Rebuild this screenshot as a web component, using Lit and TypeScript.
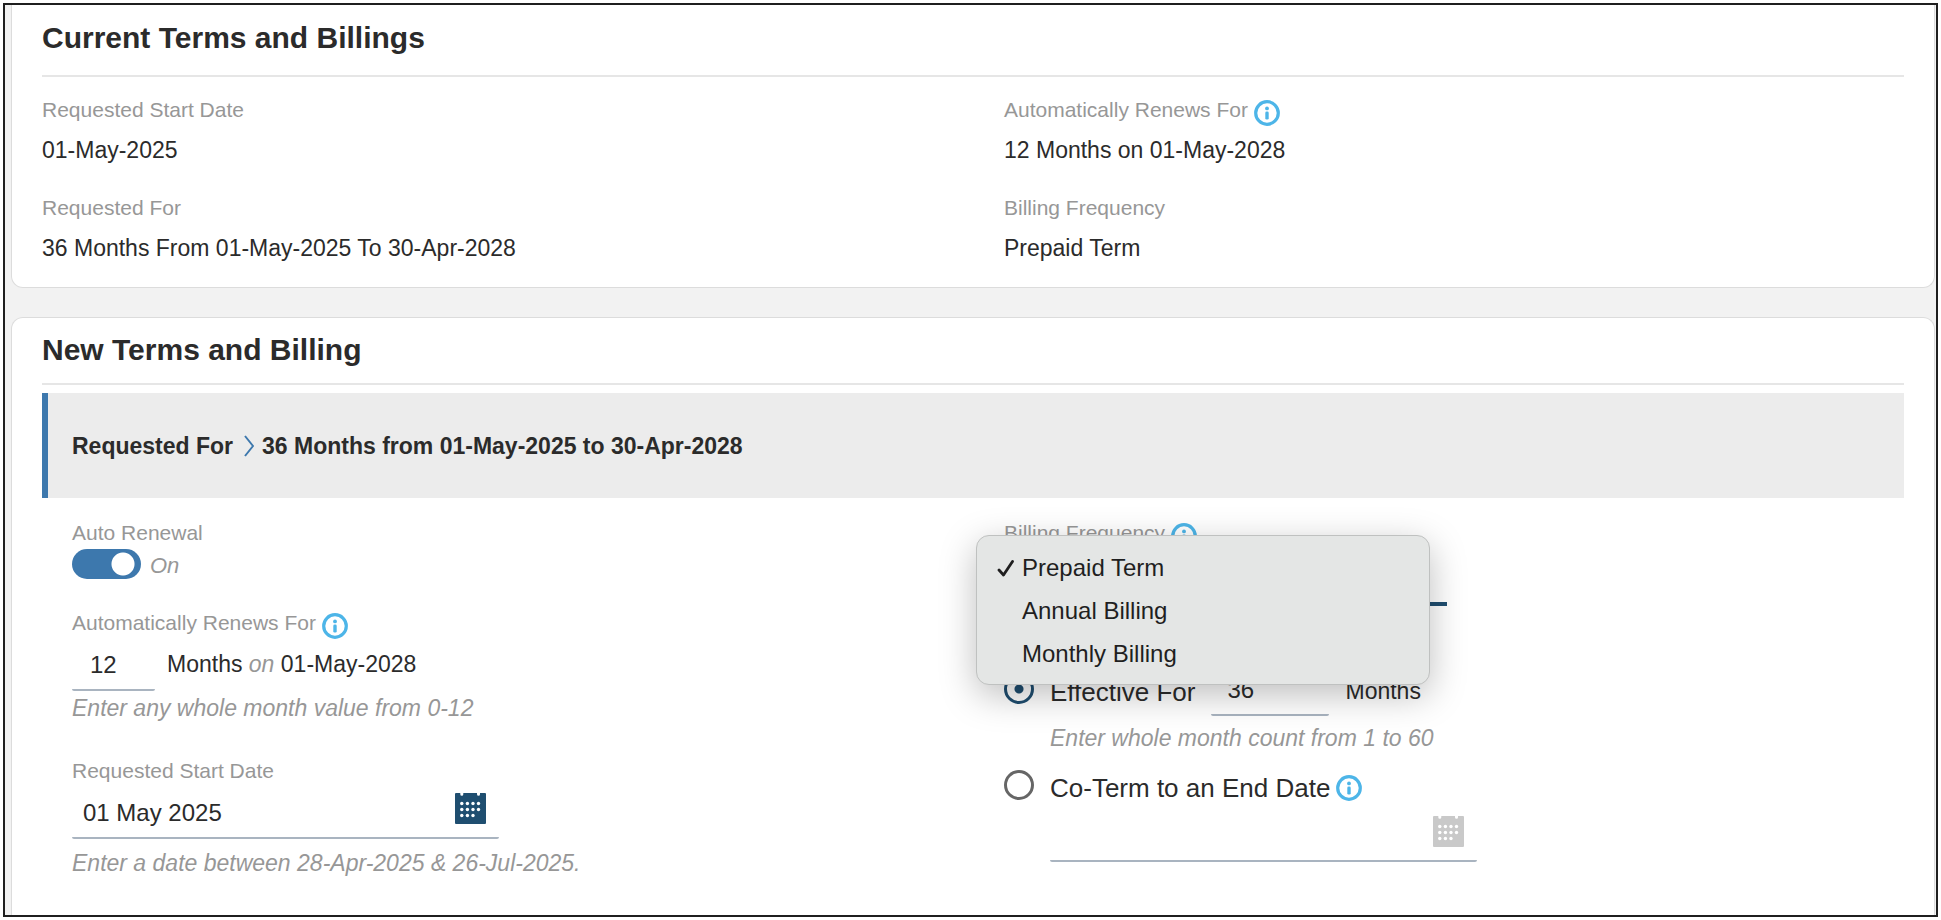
import { LitElement, html, css, svg } from "lit";
import { customElement, state } from "lit/decorators.js";

const infoIcon = html`<svg class="info" viewBox="0 0 26 26" role="img" aria-label="More information">
  <circle cx="13" cy="13" r="11.3" fill="none" stroke="#4db5e8" stroke-width="3.2" />
  <circle cx="13" cy="8.4" r="1.9" fill="#4db5e8" />
  <rect x="11.3" y="11.6" width="3.4" height="8" rx="1.3" fill="#4db5e8" />
</svg>`;

const dots = [
  [6.8, 10.5], [12.4, 10.5], [18, 10.5], [23.5, 10.5],
  [6.8, 16.5], [12.4, 16.5], [18, 16.5], [23.5, 16.5],
  [6.8, 22.5], [12.4, 22.5], [18, 22.5],
];

const calendarIcon = html`<svg viewBox="0 0 31 31" aria-hidden="true">
  <path fill="currentColor" d="M1 0H5.3V1.3A1.5 1.5 0 0 0 8.3 1.3V0H22V1.3A1.5 1.5 0 0 0 25 1.3V0H30Q31 0 31 1V30Q31 31 30 31H1Q0 31 0 30V1Q0 0 1 0Z" />
  ${dots.map(([x, y]) => svg`<circle cx=${x} cy=${y} r="1.7" fill="#fff" />`)}
</svg>`;

@customElement("app-root")
export class AppRoot extends LitElement {
  @state() private frequency = "Prepaid Term";
  private options = ["Prepaid Term", "Annual Billing", "Monthly Billing"];

  static styles = css`
    :host {
      display: block;
      height: 100vh;
      box-sizing: border-box;
      padding: 3px;
      background: #fff;
      color: #2b2b2b;
      font: 23px/28px "Liberation Sans", Arial, sans-serif;
    }
    * { box-sizing: border-box; }
    .frame {
      height: 100%;
      border: 2px solid #1f1f1f;
      padding: 0 1px 0 6px;
      background: #f2f2f2;
      overflow: hidden;
      display: flex;
      flex-direction: column;
      gap: 29px;
    }
    .card {
      background: #fff;
      border: 1px solid #dcdcdc;
      border-radius: 12px;
      padding: 14px 30px 25px;
    }
    .card.current { border-top: 0; border-radius: 0 0 12px 12px; padding-top: 15px; }
    .card.next { flex: 1 0 auto; border-bottom: 0; border-radius: 12px 12px 0 0; }
    h2 {
      margin: 0;
      font-size: 30px;
      line-height: 36px;
      padding-bottom: 15px;
      border-bottom: 2px solid #e6e6e6;
    }
    .current h2 { padding-bottom: 19px; }
    .facts {
      margin: 0;
      padding-top: 19px;
      display: grid;
      grid-template-columns: 1fr 1fr;
      gap: 30px 62px;
    }
    .facts dd { margin: 12px 0 0; }
    .label {
      display: flex;
      align-items: flex-start;
      gap: 6px;
      height: 28px;
      font-size: 21px;
      color: #979797;
    }
    .info { width: 26px; height: 26px; flex: none; display: block; }
    .label .info { margin-top: 4px; }
    .banner {
      margin-top: 8px;
      height: 105px;
      background: #ececec;
      border-left: 6px solid #3d78ad;
      padding-left: 24px;
      display: flex;
      align-items: center;
      font-weight: bold;
    }
    .chevron { width: 10px; height: 22px; margin: 0 8px 0 11px; }
    .form {
      padding: 21px 30px 0;
      display: grid;
      grid-template-columns: 1fr 1fr;
      gap: 62px;
      align-items: start;
    }
    .switch { margin-top: 2px; display: flex; align-items: center; gap: 9px; height: 30px; }
    .switch .soft { padding-top: 4px; font-size: 22px; }
    .switch input {
      appearance: none;
      margin: 0;
      width: 69px;
      height: 30px;
      border-radius: 15px;
      background: radial-gradient(circle at 51px 15px, #fff 11px, #3d78ad 12px);
    }
    .hint, .soft { font-style: italic; color: #979797; }
    .gap-m { margin-top: 30px; }
    .gap-l { margin-top: 35px; }
    .line { display: flex; align-items: center; height: 54px; }
    .text {
      height: 54px;
      border: 0;
      border-bottom: 2px solid #a9b4c0;
      border-radius: 2px;
      background: none;
      outline: 0;
      margin: 0;
      padding: 4px 0 0 11px;
      color: #2b2b2b;
      font: 24px "Liberation Sans", Arial, sans-serif;
    }
    .short { width: 83px; padding-left: 18px; margin-right: 12px; }
    .term { width: 118px; padding-left: 16px; margin: 0 16px; }
    .date { position: relative; width: 427px; }
    .date .text { width: 100%; display: block; }
    .pick {
      position: absolute;
      top: 8px;
      right: 13px;
      width: 31px;
      height: 31px;
      padding: 0;
      border: 0;
      background: none;
      color: #1f4e70;
    }
    .pick:disabled { color: #c9c9c9; }
    .pick svg { display: block; }
    .select { position: relative; width: 443px; }
    select {
      appearance: none;
      display: block;
      width: 100%;
      height: 59px;
      border: 0;
      border-bottom: 4px solid #1f4e70;
      background: none;
      padding-left: 11px;
      color: #2b2b2b;
      font: 24px "Liberation Sans", Arial, sans-serif;
    }
    .menu {
      position: absolute;
      top: -12px;
      left: -28px;
      width: 454px;
      padding: 10px 0 9px;
      background: #e4e6e5;
      border: 1px solid #bfc1c0;
      border-radius: 13px;
      box-shadow: 0 10px 36px rgba(0, 0, 0, 0.26);
    }
    .option {
      display: grid;
      grid-template-columns: 17px auto;
      gap: 8px;
      align-items: center;
      width: 100%;
      padding: 0 0 0 20px;
      border: 0;
      background: none;
      text-align: left;
      color: #1f1f1f;
      font: 24px/43px "Liberation Sans", Arial, sans-serif;
    }
    .option svg { width: 17px; height: 18px; }
    .effective { margin-top: 56px; }
    .choice { display: flex; gap: 6px; padding-top: 6px; font-size: 26px; line-height: 36px; }
    .choice .info { margin-top: 5px; }
    .unit { padding-top: 4px; }
    .radio {
      appearance: none;
      flex: none;
      width: 30px;
      height: 30px;
      margin: 0 16px 0 0;
      border: 3px solid #666;
      border-radius: 50%;
      background: #fff;
    }
    .radio:checked {
      border-color: #1f4e70;
      background: radial-gradient(circle, #1f4e70 4px, #fff 5px);
    }
    .row { display: flex; align-items: center; }
    .indent { margin-left: 46px; }
    .hint.near { margin-top: 3px; }
    .hint.mid { margin-top: 8px; }
    .hint.far { margin-top: 10px; }
    .coterm { margin-top: 12px; }
    .end { margin-top: 2px; }
  `;

  private fact(label: string, value: string, info = false) {
    return html`<div>
      <dt class="label">${label}${info ? infoIcon : ""}</dt>
      <dd>${value}</dd>
    </div>`;
  }

  private pick(value: string) {
    this.frequency = value;
  }

  render() {
    return html`<main class="frame">
      <section class="card current">
        <h2>Current Terms and Billings</h2>
        <dl class="facts">
          ${this.fact("Requested Start Date", "01-May-2025")}
          ${this.fact("Automatically Renews For", "12 Months on 01-May-2028", true)}
          ${this.fact("Requested For", "36 Months From 01-May-2025 To 30-Apr-2028")}
          ${this.fact("Billing Frequency", "Prepaid Term")}
        </dl>
      </section>
      <section class="card next">
        <h2>New Terms and Billing</h2>
        <div class="banner">
          <span>Requested For</span>
          <svg class="chevron" viewBox="0 0 10 22" aria-hidden="true">
            <path d="M1 1L9 11L1 21" fill="none" stroke="#3d78ad" stroke-width="2" />
          </svg>
          <span>36 Months from 01-May-2025 to 30-Apr-2028</span>
        </div>
        <form class="form">
          <div>
            <label class="label" for="auto">Auto Renewal</label>
            <div class="switch">
              <input id="auto" type="checkbox" role="switch" checked />
              <span class="soft">On</span>
            </div>
            <label class="label gap-m" for="renew">Automatically Renews For${infoIcon}</label>
            <div class="line">
              <input class="text short" id="renew" type="text" value="12" />
              <span>Months <span class="soft">on</span> 01-May-2028</span>
            </div>
            <div class="hint near">Enter any whole month value from 0-12</div>
            <label class="label gap-l" for="start">Requested Start Date</label>
            <div class="date">
              <input class="text" id="start" type="text" value="01 May 2025" />
              <button class="pick" type="button" aria-label="Choose start date">${calendarIcon}</button>
            </div>
            <div class="hint far">Enter a date between 28-Apr-2025 &amp; 26-Jul-2025.</div>
          </div>
          <div>
            <label class="label" for="frequency">Billing Frequency${infoIcon}</label>
            <div class="select">
              <select id="frequency" .value=${this.frequency}>
                ${this.options.map((o) => html`<option ?selected=${o === this.frequency}>${o}</option>`)}
              </select>
              <div class="menu" role="listbox" aria-label="Billing Frequency">
                ${this.options.map((o) => html`<button class="option" type="button" role="option"
                  aria-selected=${o === this.frequency} @click=${() => this.pick(o)}>
                  <svg viewBox="0 0 17 18" aria-hidden="true">
                    ${o === this.frequency
                      ? svg`<path d="M2 11L6.5 16L15.5 2.5" fill="none" stroke="#1f1f1f" stroke-width="2.8" stroke-linecap="round" stroke-linejoin="round" />`
                      : ""}
                  </svg><span>${o}</span>
                </button>`)}
              </div>
            </div>
            <div class="line effective">
              <input class="radio" id="effective" type="radio" name="mode" checked />
              <label class="choice" for="effective">Effective For</label>
              <input class="text term" id="months" type="text" value="36" aria-labelledby="effective-unit" />
              <label class="unit" id="effective-unit" for="months">Months</label>
            </div>
            <div class="hint mid indent">Enter whole month count from 1 to 60</div>
            <div class="row coterm">
              <input class="radio" id="coterm" type="radio" name="mode" />
              <label class="choice" for="coterm">Co-Term to an End Date${infoIcon}</label>
            </div>
            <div class="date indent end">
              <input class="text" type="text" aria-label="End date" disabled />
              <button class="pick" type="button" aria-label="Choose end date" disabled>${calendarIcon}</button>
            </div>
          </div>
        </form>
      </section>
    </main>`;
  }
}
